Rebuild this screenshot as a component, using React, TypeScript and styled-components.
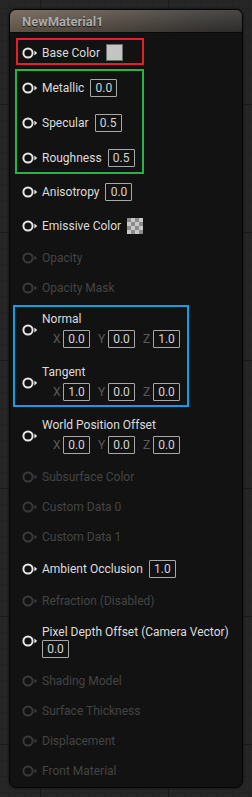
import styled, { createGlobalStyle } from "styled-components";

const GlobalStyle = createGlobalStyle`
  html, body {
    margin: 0;
    height: 100%;
  }
  body {
    background-color: #262626;
    background-image:
      linear-gradient(to right, #1a1a1a 1px, transparent 1px),
      linear-gradient(to bottom, #1a1a1a 1px, transparent 1px),
      linear-gradient(to right, #232323 1px, transparent 1px),
      linear-gradient(to bottom, #232323 1px, transparent 1px);
    background-size: 128px 128px, 128px 128px, 16px 16px, 16px 16px;
    background-position: 40px 104px, 40px 104px, 8px 8px, 8px 8px;
    font-family: Roboto, "Liberation Sans", sans-serif;
  }
  #root {
    padding: 9px 0 0 9px;
  }
`;

type Axis = { name: string; value: string };

const Node = styled.div`
  width: 234px;
  box-sizing: border-box;
  border: 1px solid #060606;
  border-radius: 7px;
  background: rgba(18, 18, 18, 0.97);
  box-shadow: 0 0 3px rgba(0, 0, 0, 0.6);
  overflow: hidden;
`;

const Header = styled.div`
  height: 22px;
  display: flex;
  align-items: center;
  padding-left: 12px;
  background:
    linear-gradient(to bottom, rgba(255, 255, 255, 0.1), rgba(0, 0, 0, 0.15)),
    linear-gradient(to right, #6d6152 0%, #5a5047 40%, #3d3a37 80%, #333231 100%);
  border-bottom: 1px solid #0a0a0a;
`;

const Title = styled.span`
  font-size: 13px;
  font-weight: 700;
  color: #ababab;
  text-shadow: 0 1px 1px rgba(0, 0, 0, 0.7);
`;

const Body = styled.div`
  padding: 2px 0 1px;
`;

const Frame = styled.div<{ $color: string; $top: number; $left: number; $w: number; $h: number }>`
  position: relative;
  &::after {
    content: "";
    position: absolute;
    top: ${(p) => p.$top}px;
    left: ${(p) => p.$left}px;
    width: ${(p) => p.$w}px;
    height: ${(p) => p.$h}px;
    box-sizing: border-box;
    border: 2px solid ${(p) => p.$color};
    pointer-events: none;
  }
`;

const Row = styled.div<{ $h: number }>`
  display: flex;
  align-items: center;
  gap: 4px;
  height: ${(p) => p.$h}px;
  padding-left: 12px;
`;

const Stack = styled.div<{ $pad: number; $indent: number }>`
  display: flex;
  flex-direction: column;
  padding: ${(p) => p.$pad}px 0;
  & > div:last-child {
    margin-left: ${(p) => p.$indent}px;
  }
`;

const Label = styled.span<{ $off?: boolean }>`
  font-size: 12px;
  line-height: 16px;
  color: ${(p) => (p.$off ? "#444444" : "#dcdcdc")};
  white-space: nowrap;
`;

const Inline = styled.div`
  display: flex;
  align-items: center;
  gap: 6px;
`;

const ValueBox = styled.div`
  width: 27px;
  height: 18px;
  box-sizing: border-box;
  border: 1px solid #a8a8a8;
  border-radius: 1px;
  display: flex;
  align-items: center;
  justify-content: center;
  font-size: 12px;
  color: #d4d4d4;
`;

const Swatch = styled.div`
  width: 17px;
  height: 17px;
  box-sizing: border-box;
  border: 1px solid #6c6c6c;
  background: #c4c4c4;
`;

const Checker = styled.div`
  width: 16px;
  height: 16px;
  background: repeating-conic-gradient(#c8c8c8 0 25%, #8c8c8c 0 50%) 0 0 / 8px 8px;
`;

const Axes = styled.div`
  display: flex;
  align-items: center;
  gap: 8px;
  margin-top: 3px;
  margin-left: 11px;
`;

const AxisItem = styled.div`
  display: flex;
  align-items: center;
`;

const AxisName = styled.span`
  width: 10px;
  font-size: 12px;
  color: #5a5a5a;
`;

const PinIcon = ({ off }: { off?: boolean }) => {
  const c = off ? "#3a3a3a" : "#e8e8e8";
  return (
    <svg width="16" height="12" viewBox="0 0 16 12">
      <circle cx="6" cy="6" r="4.6" fill="none" stroke={c} strokeWidth="2" />
      <path d="M12.4 3.6 L15.2 6 L12.4 8.4 Z" fill={c} />
    </svg>
  );
};

const Plain = ({ label, off, h = 30 }: { label: string; off?: boolean; h?: number }) => (
  <Row $h={h}>
    <PinIcon off={off} />
    <Label $off={off}>{label}</Label>
  </Row>
);

const Scalar = ({ label, value, h = 35 }: { label: string; value: string; h?: number }) => (
  <Row $h={h}>
    <PinIcon />
    <Inline>
      <Label>{label}</Label>
      <ValueBox>{value}</ValueBox>
    </Inline>
  </Row>
);

const Vector = ({ label, axes }: { label: string; axes: Axis[] }) => (
  <Row $h={53}>
    <PinIcon />
    <Stack $pad={0} $indent={11}>
      <Label>{label}</Label>
      <Axes>
        {axes.map((a) => (
          <AxisItem key={a.name}>
            <AxisName>{a.name}</AxisName>
            <ValueBox>{a.value}</ValueBox>
          </AxisItem>
        ))}
      </Axes>
    </Stack>
  </Row>
);

const xyz = (x: string, y: string, z: string): Axis[] => [
  { name: "X", value: x },
  { name: "Y", value: y },
  { name: "Z", value: z },
];

const WideBox = styled.div`
  margin-left: 5px;
`;

export default function App() {
  return (
    <>
      <GlobalStyle />
      <Node>
        <Header>
          <Title>NewMaterial1</Title>
        </Header>
        <Body>
          <Frame $color="#e3202a" $top={3} $left={6} $w={128} $h={27}>
            <Row $h={35}>
              <PinIcon />
              <Inline>
                <Label>Base Color</Label>
                <Swatch />
              </Inline>
            </Row>
          </Frame>
          <Frame $color="#27b24a" $top={-1} $left={5} $w={129} $h={105}>
            <Scalar label="Metallic" value="0.0" />
            <Scalar label="Specular" value="0.5" />
            <Scalar label="Roughness" value="0.5" />
          </Frame>
          <Scalar label="Anisotropy" value="0.0" h={34} />
          <Row $h={34}>
            <PinIcon />
            <Inline>
              <Label>Emissive Color</Label>
              <Checker />
            </Inline>
          </Row>
          <Plain label="Opacity" off />
          <Plain label="Opacity Mask" off />
          <Frame $color="#129ee4" $top={2} $left={3} $w={176} $h={102}>
            <Vector label="Normal" axes={xyz("0.0", "0.0", "1.0")} />
            <Vector label="Tangent" axes={xyz("1.0", "0.0", "0.0")} />
          </Frame>
          <Vector label="World Position Offset" axes={xyz("0.0", "0.0", "0.0")} />
          <Plain label="Subsurface Color" off />
          <Plain label="Custom Data 0" off />
          <Plain label="Custom Data 1" off />
          <Scalar label="Ambient Occlusion" value="1.0" h={34} />
          <Plain label="Refraction (Disabled)" off />
          <Row $h={50}>
            <PinIcon />
            <Stack $pad={0} $indent={0}>
              <Label>Pixel Depth Offset (Camera Vector)</Label>
              <WideBox>
                <ValueBox>0.0</ValueBox>
              </WideBox>
            </Stack>
          </Row>
          <Plain label="Shading Model" off />
          <Plain label="Surface Thickness" off />
          <Plain label="Displacement" off />
          <Plain label="Front Material" off />
        </Body>
      </Node>
    </>
  );
}
